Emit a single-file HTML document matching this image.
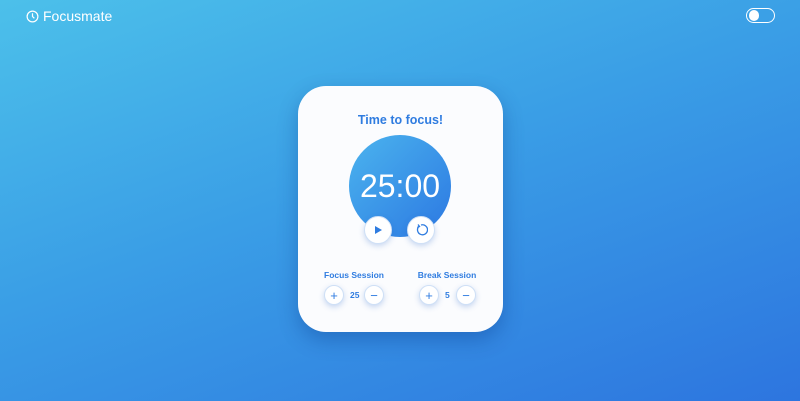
<!DOCTYPE html>
<html><head><style>
*{margin:0;padding:0;box-sizing:border-box}
body{width:800px;height:401px;overflow:hidden;background:linear-gradient(160deg,#4cc0ea 0%,#3a9ee6 45%,#2d75df 100%);font-family:"Liberation Sans",sans-serif;position:relative}
.logo{position:absolute;left:26px;top:8px;color:#fff;font-size:14px;display:flex;align-items:center;gap:4px}
.tog{position:absolute;left:746px;top:8px;width:29px;height:15px;border:1.5px solid #fff;border-radius:8px}
.tog i{position:absolute;left:1.5px;top:1px;width:10.5px;height:10.5px;background:#fff;border-radius:50%}
.card{position:absolute;left:298px;top:86px;width:205px;height:246px;background:#fbfcfe;border-radius:28px;box-shadow:0 8px 20px rgba(0,40,120,.3)}
.t{position:absolute;left:0;width:100%;top:27px;text-align:center;color:#2f7ce0;font-weight:bold;font-size:12.5px}
.circ{position:absolute;left:51px;top:49px;width:102px;height:102px;border-radius:50%;background:linear-gradient(135deg,#4bb4ee,#2c78e2);color:#fff;font-size:32px;text-align:center;line-height:102px}
.b{position:absolute;border-radius:50%;background:#fff;border:1px solid #cfe0f6;box-shadow:0 2px 6px rgba(40,100,200,.25);display:flex;align-items:center;justify-content:center;color:#2f7ce0}
.lab{position:absolute;top:184px;font-size:8.5px;font-weight:bold;color:#2f7ce0;text-align:center;width:80px}
.n{position:absolute;top:204px;font-size:8.5px;font-weight:bold;color:#2f7ce0}
</style></head><body>
<div class="logo"><svg width="13" height="13" viewBox="0 0 14 14"><circle cx="7" cy="7" r="5.8" fill="none" stroke="#fff" stroke-width="1.3"/><path d="M7 3.5V7l2 2" fill="none" stroke="#fff" stroke-width="1.3"/></svg>Focusmate</div>
<div class="tog"><i></i></div>
<div class="card">
<div class="t">Time to focus!</div>
<div class="circ">25:00</div>
<div class="b" style="left:66px;top:130px;width:28px;height:28px"><svg width="10" height="10" viewBox="0 0 10 10"><path d="M2 1L9 5L2 9Z" fill="#2f7ce0"/></svg></div>
<div class="b" style="left:109px;top:130px;width:28px;height:28px"><svg width="14" height="14" viewBox="0 0 14 14"><path d="M5 3.2A5 5 0 1 0 7 2" fill="none" stroke="#2f7ce0" stroke-width="1.3"/><path d="M4 1.5L5.5 3.5L3.3 4.5" fill="none" stroke="#2f7ce0" stroke-width="1.3"/></svg></div>
<div class="lab" style="left:16px">Focus Session</div>
<div class="lab" style="left:109px">Break Session</div>
<div class="b" style="left:26px;top:199px;width:20px;height:20px;font-size:13px">+</div>
<div class="n" style="left:52px">25</div>
<div class="b" style="left:66px;top:199px;width:20px;height:20px;font-size:13px">−</div>
<div class="b" style="left:121px;top:199px;width:20px;height:20px;font-size:13px">+</div>
<div class="n" style="left:147px">5</div>
<div class="b" style="left:158px;top:199px;width:20px;height:20px;font-size:13px">−</div>
</div>
</body></html>
